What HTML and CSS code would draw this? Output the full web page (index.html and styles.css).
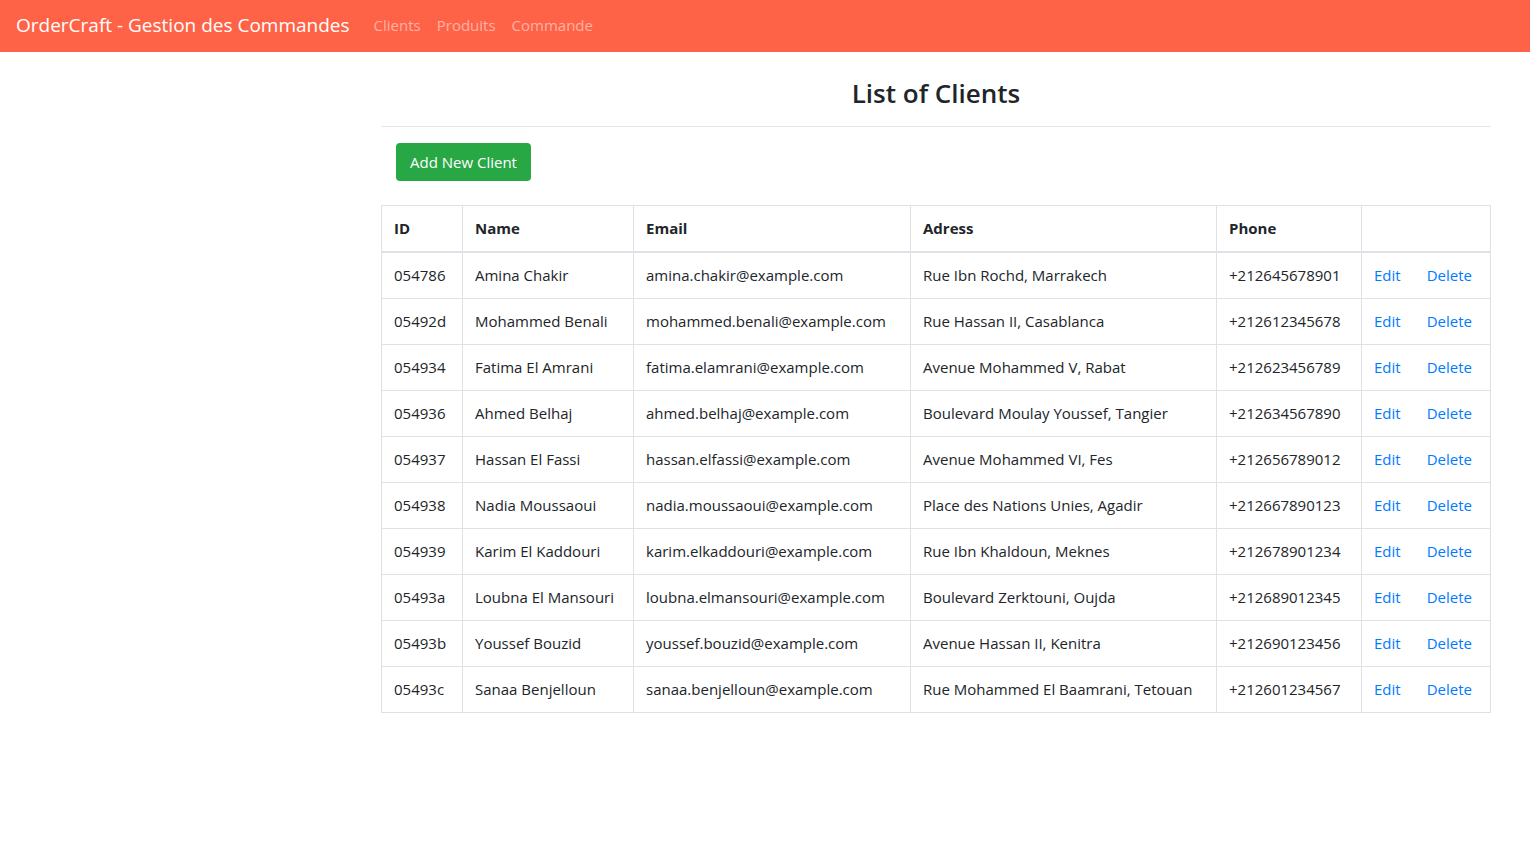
FILE: index.html
```html
<!DOCTYPE html>
<html lang="fr">
<head>
<meta charset="utf-8">
<title>OrderCraft</title>
<link rel="stylesheet" href="styles.css">
</head>
<body>
<nav class="navbar">
  <a class="brand" href="#">OrderCraft - Gestion des Commandes</a>
  <ul class="nav">
    <li><a href="#">Clients</a></li>
    <li><a href="#">Produits</a></li>
    <li><a href="#">Commande</a></li>
  </ul>
</nav>
<main class="main">
  <h2 class="title">List of Clients</h2>
  <hr class="rule">
  <div class="actions-bar"><a class="btn-success" href="#">Add New Client</a></div>
  <table class="table">
    <colgroup>
      <col class="c-id"><col class="c-name"><col class="c-email"><col class="c-addr"><col class="c-phone"><col class="c-act">
    </colgroup>
    <thead>
      <tr><th>ID</th><th>Name</th><th>Email</th><th>Adress</th><th>Phone</th><th></th></tr>
    </thead>
    <tbody>
      <tr><td>054786</td><td>Amina Chakir</td><td>amina.chakir@example.com</td><td>Rue Ibn Rochd, Marrakech</td><td>+212645678901</td><td><a class="lnk" href="#">Edit</a><a class="lnk" href="#">Delete</a></td></tr>
      <tr><td>05492d</td><td>Mohammed Benali</td><td>mohammed.benali@example.com</td><td>Rue Hassan II, Casablanca</td><td>+212612345678</td><td><a class="lnk" href="#">Edit</a><a class="lnk" href="#">Delete</a></td></tr>
      <tr><td>054934</td><td>Fatima El Amrani</td><td>fatima.elamrani@example.com</td><td>Avenue Mohammed V, Rabat</td><td>+212623456789</td><td><a class="lnk" href="#">Edit</a><a class="lnk" href="#">Delete</a></td></tr>
      <tr><td>054936</td><td>Ahmed Belhaj</td><td>ahmed.belhaj@example.com</td><td>Boulevard Moulay Youssef, Tangier</td><td>+212634567890</td><td><a class="lnk" href="#">Edit</a><a class="lnk" href="#">Delete</a></td></tr>
      <tr><td>054937</td><td>Hassan El Fassi</td><td>hassan.elfassi@example.com</td><td>Avenue Mohammed VI, Fes</td><td>+212656789012</td><td><a class="lnk" href="#">Edit</a><a class="lnk" href="#">Delete</a></td></tr>
      <tr><td>054938</td><td>Nadia Moussaoui</td><td>nadia.moussaoui@example.com</td><td>Place des Nations Unies, Agadir</td><td>+212667890123</td><td><a class="lnk" href="#">Edit</a><a class="lnk" href="#">Delete</a></td></tr>
      <tr><td>054939</td><td>Karim El Kaddouri</td><td>karim.elkaddouri@example.com</td><td>Rue Ibn Khaldoun, Meknes</td><td>+212678901234</td><td><a class="lnk" href="#">Edit</a><a class="lnk" href="#">Delete</a></td></tr>
      <tr><td>05493a</td><td>Loubna El Mansouri</td><td>loubna.elmansouri@example.com</td><td>Boulevard Zerktouni, Oujda</td><td>+212689012345</td><td><a class="lnk" href="#">Edit</a><a class="lnk" href="#">Delete</a></td></tr>
      <tr><td>05493b</td><td>Youssef Bouzid</td><td>youssef.bouzid@example.com</td><td>Avenue Hassan II, Kenitra</td><td>+212690123456</td><td><a class="lnk" href="#">Edit</a><a class="lnk" href="#">Delete</a></td></tr>
      <tr><td>05493c</td><td>Sanaa Benjelloun</td><td>sanaa.benjelloun@example.com</td><td>Rue Mohammed El Baamrani, Tetouan</td><td>+212601234567</td><td><a class="lnk" href="#">Edit</a><a class="lnk" href="#">Delete</a></td></tr>
    </tbody>
  </table>
</main>
</body>
</html>
```
FILE: styles.css
```css
* { box-sizing: border-box; }
body {
  margin: 0;
  font-family: "Segoe UI", "Open Sans", "Noto Sans", Arial, sans-serif;
  font-size: 15px;
  color: #212529;
  background: #fff;
}
a { text-decoration: none; }
.navbar {
  height: 52px;
  background: #ff6347;
  display: flex;
  align-items: center;
  padding: 0 16px 2px;
}
.brand {
  color: #fff;
  font-size: 19px;
  margin-right: 16px;
}
.nav {
  list-style: none;
  display: flex;
  margin: 0;
  padding: 0;
}
.nav a {
  display: block;
  padding: 0 8px;
  color: rgba(255,255,255,0.5);
  font-size: 15px;
}
.main {
  margin: 0 39px 0 381px;
}
.title {
  margin: 0;
  padding-top: 23px;
  text-align: center;
  font-size: 26px;
  font-weight: 600;
  line-height: 36px;
}
.rule {
  margin: 15px 0 0;
  border: 0;
  border-top: 1px solid #e5e7eb;
}
.actions-bar {
  padding: 16px 15px 24px;
}
.btn-success {
  display: inline-block;
  background: #28a745;
  color: #fff;
  border-radius: 4px;
  padding: 7px 14px;
  line-height: 24px;
}
.table {
  width: 100%;
  border-collapse: collapse;
  table-layout: fixed;
}
.c-id { width: 81px; }
.c-name { width: 171px; }
.c-email { width: 277px; }
.c-addr { width: 306px; }
.c-phone { width: 145px; }
.c-act { width: 129px; }
.table th, .table td {
  border: 1px solid #dee2e6;
  text-align: left;
  white-space: nowrap;
  padding: 11px 12px;
}
.table th {
  line-height: 23px;
  font-weight: 700;
  border-bottom-width: 2px;
}
.table td {
  line-height: 23px;
}
.lnk {
  color: #007bff;
  margin-right: 26px;
}
.lnk:last-child { margin-right: 0; }
```
